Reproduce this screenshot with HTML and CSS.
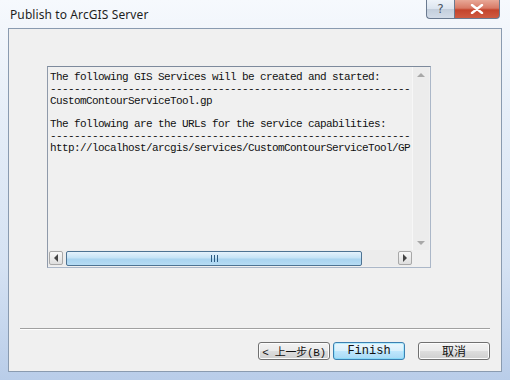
FILE: index.html
```html
<!DOCTYPE html>
<html>
<head>
<meta charset="utf-8">
<link rel="stylesheet" href="styles.css">
</head>
<body>
<div class="window">
  <div class="titlebar">
    <div class="title">Publish to ArcGIS Server</div>
    <div class="caption-btns">
      <div class="cap help">?</div>
      <div class="cap close">
        <svg width="14" height="10" viewBox="0 0 14 10"><path d="M2 1 L12 9 M12 1 L2 9" stroke="#fff" stroke-width="2.4" stroke-linecap="round"/></svg>
      </div>
    </div>
  </div>
  <div class="client">
    <div class="textbox">
      <div class="content">
        <div class="line">The following GIS Services will be created and started:</div>
        <div class="line">------------------------------------------------------------</div>
        <div class="line">CustomContourServiceTool.gp</div>
        <div class="line">&nbsp;</div>
        <div class="line">The following are the URLs for the service capabilities:</div>
        <div class="line">------------------------------------------------------------</div>
        <div class="line">http://localhost/arcgis/services/CustomContourServiceTool/GP</div>
      </div>
      <div class="vscroll">
        <div class="arrow-up"></div>
        <div class="arrow-down"></div>
      </div>
      <div class="hscroll">
        <div class="hbtn"><div class="tri-left"></div></div>
        <div class="thumb"><span class="grip"></span><span class="grip"></span><span class="grip"></span></div>
        <div class="track"></div>
        <div class="hbtn"><div class="tri-right"></div></div>
      </div>
      <div class="corner"></div>
    </div>
    <div class="separator"></div>
    <div class="buttons">
      <div class="btn back">&lt; 上一步(B)</div>
      <div class="btn default">Finish</div>
      <div class="btn cancel">取消</div>
    </div>
  </div>
</div>
</body>
</html>
```

FILE: styles.css
```css
html, body {
  margin: 0;
  padding: 0;
  background: #fff;
}
.window {
  width: 510px;
  height: 380px;
  box-sizing: border-box;
  padding: 0 8px 8px 8px;
  background: linear-gradient(180deg, #f6f9fd 0%, #e6eef8 30%, #d5e2f3 70%, #b9cde9 100%);
  display: flex;
  flex-direction: column;
}
.titlebar {
  height: 28px;
  display: flex;
  justify-content: space-between;
  align-items: flex-start;
  margin-right: 2px;
}
.title {
  font-family: "Noto Sans", "Open Sans", sans-serif;
  font-size: 12px;
  color: #1e1e1e;
  padding: 6px 0 0 2px;
  letter-spacing: 0.1px;
}
.caption-btns {
  display: flex;
}
.cap {
  height: 19px;
  box-sizing: border-box;
  border: 1px solid #6a7a90;
  border-top: none;
  display: flex;
  align-items: center;
  justify-content: center;
}
.help {
  width: 28px;
  border-radius: 0 0 0 4px;
  border-right: none;
  background: linear-gradient(180deg, #eef3f9 0%, #dbe4ef 50%, #c3cedc 51%, #d3dce8 100%);
  font-family: "DejaVu Sans", sans-serif;
  font-size: 12px;
  color: #4a5564;
}
.close {
  width: 46px;
  border-radius: 0 0 4px 0;
  background: linear-gradient(180deg, #e8a897 0%, #d87a66 45%, #c4442c 55%, #cf5b41 100%);
}
.client {
  flex: 1;
  background: #f0f0f0;
  border: 1px solid #8a9bb0;
  display: flex;
  flex-direction: column;
  padding: 37px 0 0 38px;
}
.textbox {
  width: 384px;
  height: 202px;
  box-sizing: border-box;
  border: 1px solid #abb7c8;
  border-top-color: #7d8a9c;
  border-left-color: #8f9aaa;
  display: grid;
  grid-template-columns: 364px 17px;
  grid-template-rows: 183px 16px;
  overflow: hidden;
}
.content {
  overflow: hidden;
  padding: 5px 0 0 2px;
  font-family: "Liberation Mono", "DejaVu Sans Mono", monospace;
  font-size: 11px;
  letter-spacing: -0.6px;
  color: #111;
}
.line {
  white-space: pre;
  height: 11.8px;
  line-height: 11.8px;
}
.vscroll {
  background: #ececec;
  border-left: 1px solid #f7f7f7;
  display: flex;
  flex-direction: column;
  justify-content: space-between;
  align-items: center;
  padding: 6px 0 5px 0;
}
.arrow-up {
  width: 0; height: 0;
  border-left: 4px solid transparent;
  border-right: 4px solid transparent;
  border-bottom: 4px solid #a8a8a8;
}
.arrow-down {
  width: 0; height: 0;
  border-left: 4px solid transparent;
  border-right: 4px solid transparent;
  border-top: 4px solid #a8a8a8;
}
.hscroll {
  display: flex;
  align-items: center;
  background: #ececec;
  padding-left: 1px;
}
.hbtn {
  width: 14px;
  height: 14px;
  box-sizing: border-box;
  border: 1px solid #a8a8a8;
  border-radius: 2px;
  background: linear-gradient(180deg, #f8f8f8, #dedede);
  display: flex;
  align-items: center;
  justify-content: center;
}
.tri-left {
  width: 0; height: 0;
  border-top: 4px solid transparent;
  border-bottom: 4px solid transparent;
  border-right: 4px solid #444;
}
.tri-right {
  width: 0; height: 0;
  border-top: 4px solid transparent;
  border-bottom: 4px solid transparent;
  border-left: 4px solid #444;
}
.thumb {
  margin-left: 3px;
  width: 296px;
  height: 15px;
  box-sizing: border-box;
  border: 1px solid #4d7393;
  border-radius: 2px;
  background: linear-gradient(180deg, #e4f2fc 0%, #c5e3f6 45%, #a9d4f0 55%, #b6dcf4 100%);
  display: flex;
  align-items: center;
  justify-content: center;
  gap: 2px;
}
.grip {
  width: 1px;
  height: 7px;
  background: #2c5a80;
}
.track {
  flex: 1;
}
.corner {
  background: #f0f0f0;
}
.separator {
  margin: 60px 11px 0 -27px;
  height: 1px;
  background: #a0a0a0;
  border-bottom: 1px solid #fff;
}
.buttons {
  display: flex;
  justify-content: flex-end;
  margin: 12px 11px 0 0;
}
.btn {
  width: 72px;
  height: 18px;
  box-sizing: border-box;
  border: 1px solid #707070;
  border-radius: 3px;
  background: linear-gradient(180deg, #f2f2f2 0%, #ebebeb 48%, #dddddd 52%, #cfcfcf 100%);
  font-family: "Liberation Mono", "Noto Sans CJK SC", monospace;
  font-size: 12px;
  color: #111;
  display: flex;
  align-items: center;
  justify-content: center;
  margin-left: 3px;
  box-shadow: inset 0 0 0 1px #fcfcfc;
  white-space: nowrap;
}
.btn.back {
  font-size: 11px;
  letter-spacing: -0.3px;
}
.btn.default {
  border-color: #3c7fb1;
  background: linear-gradient(180deg, #eaf6fd 0%, #d9f0fc 48%, #bee6fd 52%, #a7d9f5 100%);
  box-shadow: inset 0 0 0 1px #48d8fb55;
}
.btn.cancel {
  margin-left: 13px;
}
```
